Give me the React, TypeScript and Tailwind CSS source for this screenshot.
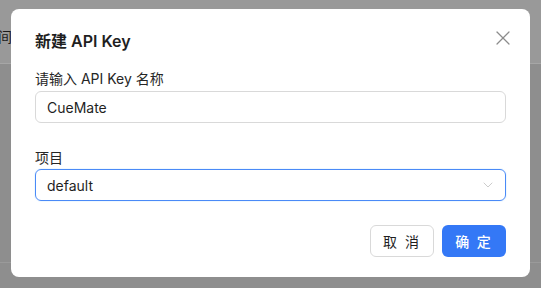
import { ChevronDown, X } from "lucide-react";

const font = { fontFamily: '"Inter", "Noto Sans CJK SC", sans-serif' };

export default function App() {
  return (
    <div className="relative w-[541px] h-[288px] overflow-hidden bg-[#8e8e8e]" style={font}>
      {/* page behind the mask */}
      <div className="flex flex-col h-full">
        <div className="h-[64px] bg-[#999999] border-b border-[#a6a6a6] flex items-center">
          <span className="ml-[-2px] mt-[10px] text-[14px] text-[#1a1a1a]">间</span>
        </div>
        <div className="flex-1" />
        <div className="h-[26px] border-t border-[#9a9a9a]" />
      </div>

      {/* modal */}
      <div className="absolute left-[11px] top-[9px] w-[519px] h-[268px] bg-white rounded-[8px] px-[24px] pt-[20px] pb-[20px] flex flex-col">
        <div className="flex items-center justify-between h-[24px]">
          <h2 className="text-[16px] font-semibold text-[#1f1f1f] leading-[24px]">新建 API Key</h2>
          <X className="w-[24px] h-[24px] text-[#8c8c8c] -mr-[9px] -mt-[7px]" strokeWidth={1.2} />
        </div>

        <label className="mt-[15px] text-[14px] leading-[22px] text-[#262626]">请输入 API Key 名称</label>
        <div className="mt-[1px] h-[32px] rounded-[6px] border border-[#d9d9d9] flex items-center px-[11px] text-[14px] text-[#1f1f1f]">
          CueMate
        </div>

        <label className="mt-[24px] text-[14px] leading-[22px] text-[#262626]">项目</label>
        <div className="h-[32px] rounded-[6px] border border-[#4a8af7] shadow-[0_0_0_1px_rgba(5,145,255,0.06)] flex items-center justify-between px-[11px] text-[14px] text-[#1f1f1f]">
          <span>default</span>
          <ChevronDown className="w-[16px] h-[16px] text-[#c4c4c4] -mr-[2px]" strokeWidth={1.3} />
        </div>

        <div className="mt-[24px] flex justify-end gap-[8px]">
          <button className="h-[32px] w-[64px] rounded-[6px] border border-[#d9d9d9] bg-white text-[14px] text-[#1f1f1f] tracking-[2px]">
            取 消
          </button>
          <button className="h-[32px] w-[64px] rounded-[6px] bg-[#3478f6] text-[14px] text-white font-medium tracking-[2px]">
            确 定
          </button>
        </div>
      </div>
    </div>
  );
}
